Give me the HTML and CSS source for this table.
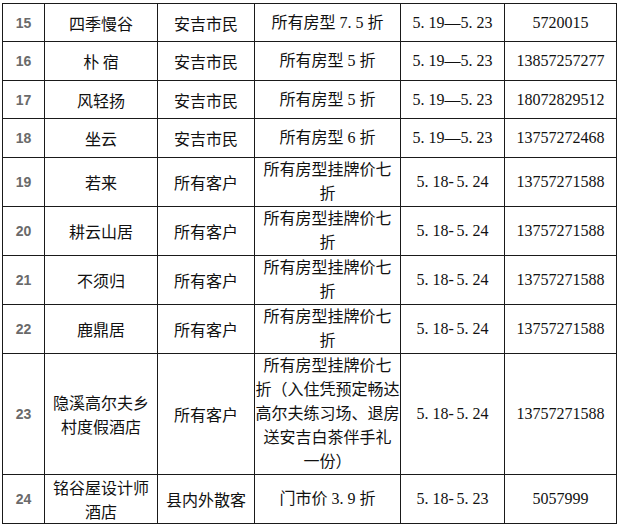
FILE: index.html
```html
<!DOCTYPE html>
<html lang="zh">
<head>
<meta charset="utf-8">
<link rel="stylesheet" href="styles.css">
</head>
<body>
<table class="grid">
  <colgroup>
    <col class="c1"><col class="c2"><col class="c3"><col class="c4"><col class="c5"><col class="c6">
  </colgroup>
  <tr class="r38">
    <td class="no">15</td><td>四季慢谷</td><td>安吉市民</td>
    <td class="mix">所有房型 7<span class="d">.</span>5 折</td>
    <td class="num">5<span class="d">.</span>19—5<span class="d">.</span>23</td><td class="num">5720015</td>
  </tr>
  <tr class="r39">
    <td class="no">16</td><td>朴 宿</td><td>安吉市民</td>
    <td class="mix">所有房型 5 折</td>
    <td class="num">5<span class="d">.</span>19—5<span class="d">.</span>23</td><td class="num">13857257277</td>
  </tr>
  <tr class="r38">
    <td class="no">17</td><td>风轻扬</td><td>安吉市民</td>
    <td class="mix">所有房型 5 折</td>
    <td class="num">5<span class="d">.</span>19—5<span class="d">.</span>23</td><td class="num">18072829512</td>
  </tr>
  <tr class="r39">
    <td class="no">18</td><td>坐云</td><td>安吉市民</td>
    <td class="mix">所有房型 6 折</td>
    <td class="num">5<span class="d">.</span>19—5<span class="d">.</span>23</td><td class="num">13757272468</td>
  </tr>
  <tr class="r49">
    <td class="no">19</td><td>若来</td><td>所有客户</td>
    <td class="mix">所有房型挂牌价七<br>折</td>
    <td class="num">5<span class="d">.</span>18<span class="h">-</span>5<span class="d">.</span>24</td><td class="num">13757271588</td>
  </tr>
  <tr class="r49">
    <td class="no">20</td><td>耕云山居</td><td>所有客户</td>
    <td class="mix">所有房型挂牌价七<br>折</td>
    <td class="num">5<span class="d">.</span>18<span class="h">-</span>5<span class="d">.</span>24</td><td class="num">13757271588</td>
  </tr>
  <tr class="r49">
    <td class="no">21</td><td>不须归</td><td>所有客户</td>
    <td class="mix">所有房型挂牌价七<br>折</td>
    <td class="num">5<span class="d">.</span>18<span class="h">-</span>5<span class="d">.</span>24</td><td class="num">13757271588</td>
  </tr>
  <tr class="r49">
    <td class="no">22</td><td>鹿鼎居</td><td>所有客户</td>
    <td class="mix">所有房型挂牌价七<br>折</td>
    <td class="num">5<span class="d">.</span>18<span class="h">-</span>5<span class="d">.</span>24</td><td class="num">13757271588</td>
  </tr>
  <tr class="r121">
    <td class="no">23</td><td>隐溪高尔夫乡<br>村度假酒店</td><td>所有客户</td>
    <td class="mix">所有房型挂牌价七<br>折（入住凭预定畅达<br>高尔夫练习场、退房<br>送安吉白茶伴手礼<br>一份）</td>
    <td class="num">5<span class="d">.</span>18<span class="h">-</span>5<span class="d">.</span>24</td><td class="num">13757271588</td>
  </tr>
  <tr class="r49">
    <td class="no">24</td><td>铭谷屋设计师<br>酒店</td><td>县内外散客</td>
    <td class="mix">门市价 3<span class="d">.</span>9 折</td>
    <td class="num">5<span class="d">.</span>18<span class="h">-</span>5<span class="d">.</span>23</td><td class="num">5057999</td>
  </tr>
</table>
</body>
</html>
```

FILE: styles.css
```css
html, body {
  margin: 0;
  padding: 0;
  background: #ffffff;
}

body {
  padding: 3px 0 0 2px;
}

.grid {
  border-collapse: collapse;
  table-layout: fixed;
  width: 614px;
  font-family: "Liberation Serif", "Noto Sans CJK SC", serif;
  font-size: 16px;
  color: #111111;
}

.c1 { width: 42px; }
.c2 { width: 113px; }
.c3 { width: 97px; }
.c4 { width: 146px; }
.c5 { width: 104px; }
.c6 { width: 112px; }

.grid td {
  border: 1px solid #1a1a1a;
  padding: 0;
  text-align: center;
  vertical-align: middle;
  line-height: 24px;
  white-space: nowrap;
  font-family: "Noto Sans CJK SC", sans-serif;
}

.grid td.mix,
.grid td.num {
  font-family: "Liberation Serif", "Noto Sans CJK SC", serif;
}

.grid td.no {
  font-family: "Liberation Sans", sans-serif;
  font-weight: bold;
  font-size: 14px;
  color: #6a6a6a;
}

.d { letter-spacing: 4px; }
.h { letter-spacing: 2.5px; }

.r38 td { height: 37px; }
.r39 td { height: 38px; }
.r49 td { height: 48px; }
.r121 td { height: 120px; }
```
